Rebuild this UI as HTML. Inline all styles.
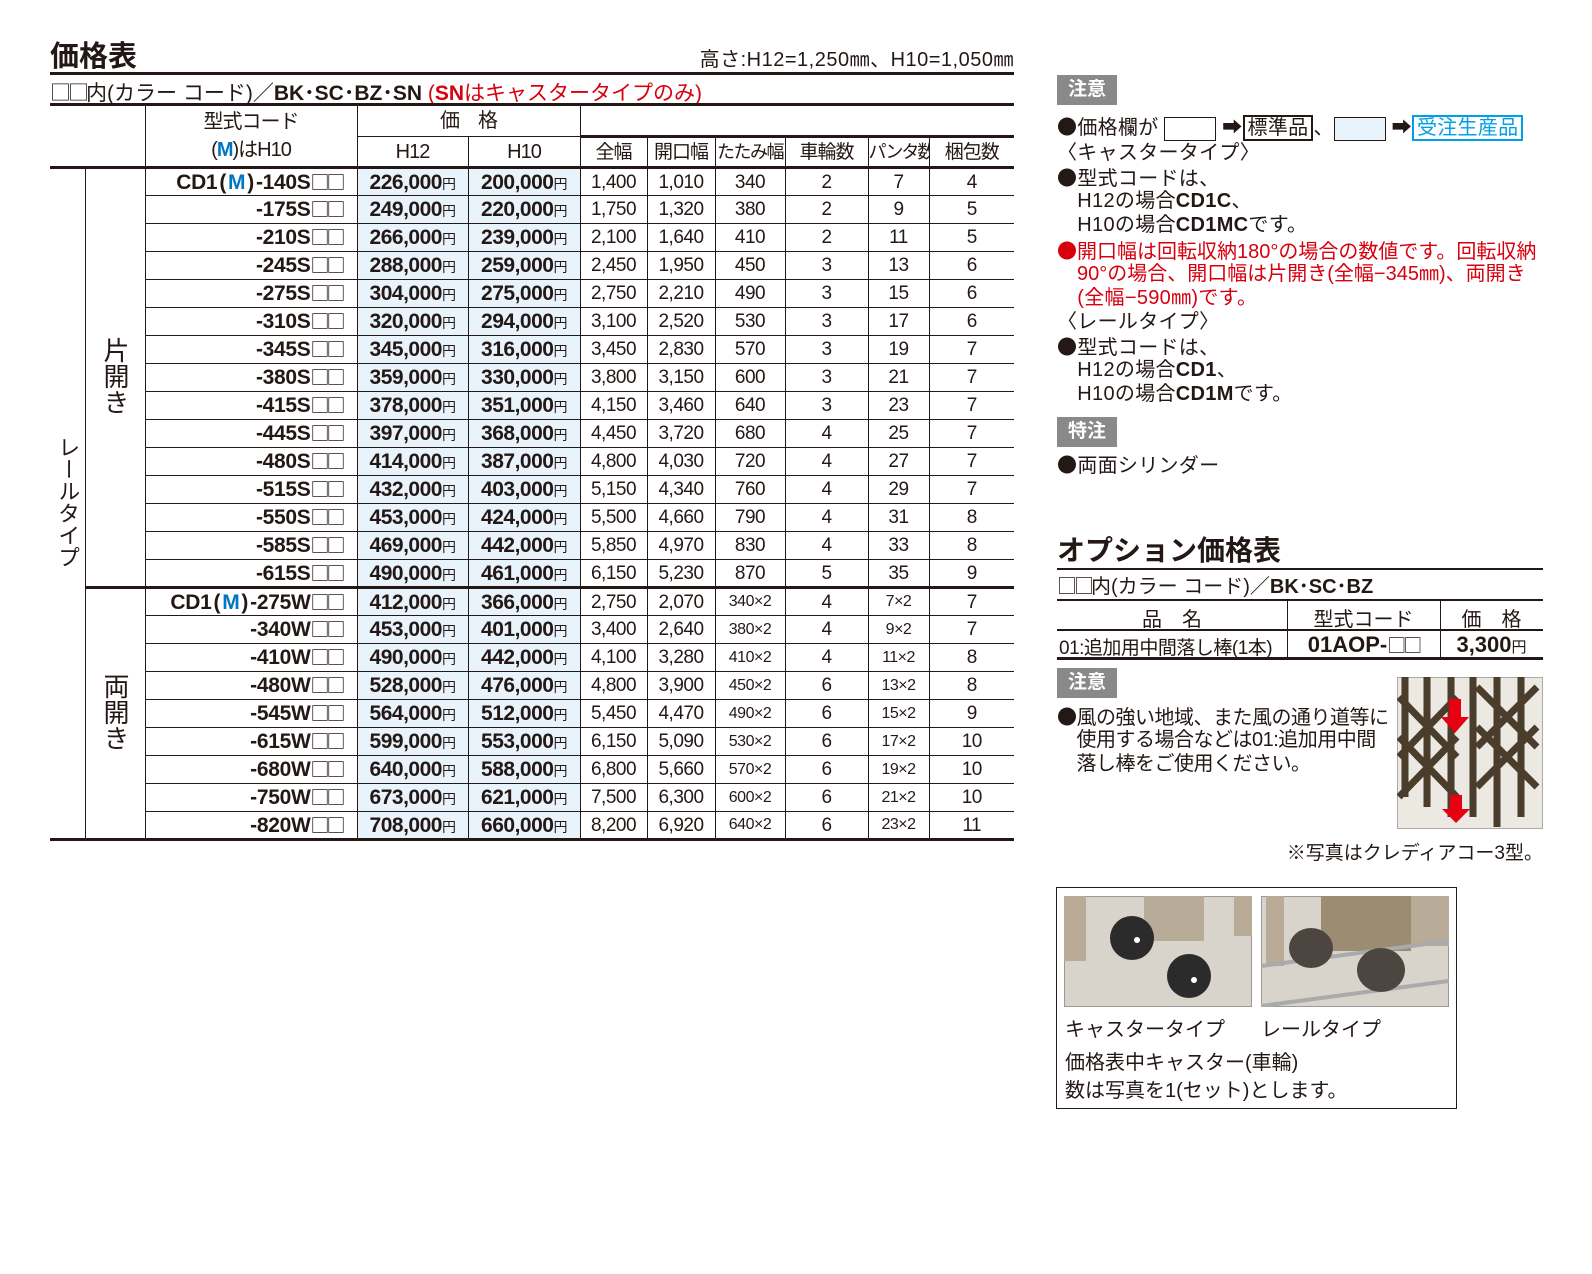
<!DOCTYPE html>
<html><head><meta charset="utf-8">
<style>
*{margin:0;padding:0;box-sizing:border-box}
body{width:1592px;height:1274px;background:#fff;position:relative;font-family:"Liberation Sans","Noto Sans CJK JP",sans-serif;color:#231815;overflow:hidden}
.a{position:absolute;white-space:nowrap}
.k{font-family:"Noto Sans CJK JP",sans-serif;font-weight:normal}
table{position:absolute;left:50px;top:103px;border-collapse:collapse;table-layout:fixed;width:964px;border-top:3px solid #231815;border-bottom:3px solid #231815}
td{border:1px solid #231815;text-align:center;vertical-align:middle;font-size:19px;line-height:1;padding:0;white-space:nowrap;overflow:hidden}
tr.d td{height:28px}
td.c{text-align:right;padding-right:14px;font-weight:bold;font-size:21px;letter-spacing:-0.3px}
td.c .k{font-size:19px;letter-spacing:-3px}
.pr{margin:0 2px}
td.p{background:#e8f3fb;font-weight:bold;font-size:21px;letter-spacing:-0.5px}
td.n{font-size:19px;letter-spacing:-0.5px}
td.s{font-size:16px;letter-spacing:-0.5px}
.y{font-size:14px;font-weight:normal}
.bl{color:#0075c2}
.red{color:#d7000f}
.hd td{font-size:19px;font-weight:normal;letter-spacing:-1px}
.vt{writing-mode:vertical-rl;text-orientation:upright;font-size:26px}
.badge{position:absolute;background:#898989;color:#fff;font-size:19px;font-weight:bold;text-align:center;line-height:30px;width:60px;height:30px}
.t{position:absolute;left:1057px;font-size:20px;white-space:nowrap;line-height:24px;letter-spacing:0.3px}
.tk{border-top:3px solid #231815}
</style></head><body>
<div class="a" style="left:50px;top:33px;font-size:29px;font-weight:bold">価格表</div>
<div class="a" style="right:578px;top:43px;font-size:20px;letter-spacing:0.5px">高さ:H12=1,250㎜、H10=1,050㎜</div>
<div class="a" style="left:50px;top:72px;width:964px;border-top:3px solid #231815"></div>
<div class="a" style="left:50px;top:77px;font-size:21px"><span class="k" style="letter-spacing:-3px">□□</span>内(カラー コード)／<b>BK･SC･BZ･SN</b> <span class="red">(<b>SN</b>はキャスタータイプのみ)</span></div>

<table>
<colgroup><col style="width:35px"><col style="width:60px"><col style="width:212px"><col style="width:111px"><col style="width:112px"><col style="width:67px"><col style="width:68px"><col style="width:70px"><col style="width:83px"><col style="width:61px"><col style="width:85px"></colgroup>
<tr class="hd"><td colspan="2" rowspan="2" style="border-left:none;border-bottom:none"></td><td rowspan="2" style="line-height:28px;font-size:20px">型式コード<br>(<b class="bl">M</b>)はH10</td><td colspan="2" style="height:32px;font-size:20px">価　格</td><td colspan="6" style="border-right:none;border-bottom:3px solid #231815;border-top:none"></td></tr>
<tr class="hd"><td style="height:31px;font-size:20px">H12</td><td style="font-size:20px">H10</td><td>全幅</td><td>開口幅</td><td style="font-size:18px;letter-spacing:-1.5px">たたみ幅</td><td>車輪数</td><td style="font-size:18px;letter-spacing:-2px">パンタ数</td><td style="border-right:none">梱包数</td></tr>
<tr class="d" style="border-top:3px solid #231815"><td rowspan="24" style="border-left:none;border-bottom:none"><span class="vt" style="font-size:22px">レールタイプ</span></td><td rowspan="15"><span class="vt">片開き</span></td><td class="c">CD1<span class="pr">(</span><span class="bl">M</span><span class="pr">)</span>-140S<span class="k">□□</span></td><td class="p">226,000<span class="y">円</span></td><td class="p">200,000<span class="y">円</span></td><td class="n">1,400</td><td class="n">1,010</td><td class="n">340</td><td class="n">2</td><td class="n">7</td><td class="n" style="border-right:none">4</td></tr>
<tr class="d"><td class="c">-175S<span class="k">□□</span></td><td class="p">249,000<span class="y">円</span></td><td class="p">220,000<span class="y">円</span></td><td class="n">1,750</td><td class="n">1,320</td><td class="n">380</td><td class="n">2</td><td class="n">9</td><td class="n" style="border-right:none">5</td></tr>
<tr class="d"><td class="c">-210S<span class="k">□□</span></td><td class="p">266,000<span class="y">円</span></td><td class="p">239,000<span class="y">円</span></td><td class="n">2,100</td><td class="n">1,640</td><td class="n">410</td><td class="n">2</td><td class="n">11</td><td class="n" style="border-right:none">5</td></tr>
<tr class="d"><td class="c">-245S<span class="k">□□</span></td><td class="p">288,000<span class="y">円</span></td><td class="p">259,000<span class="y">円</span></td><td class="n">2,450</td><td class="n">1,950</td><td class="n">450</td><td class="n">3</td><td class="n">13</td><td class="n" style="border-right:none">6</td></tr>
<tr class="d"><td class="c">-275S<span class="k">□□</span></td><td class="p">304,000<span class="y">円</span></td><td class="p">275,000<span class="y">円</span></td><td class="n">2,750</td><td class="n">2,210</td><td class="n">490</td><td class="n">3</td><td class="n">15</td><td class="n" style="border-right:none">6</td></tr>
<tr class="d"><td class="c">-310S<span class="k">□□</span></td><td class="p">320,000<span class="y">円</span></td><td class="p">294,000<span class="y">円</span></td><td class="n">3,100</td><td class="n">2,520</td><td class="n">530</td><td class="n">3</td><td class="n">17</td><td class="n" style="border-right:none">6</td></tr>
<tr class="d"><td class="c">-345S<span class="k">□□</span></td><td class="p">345,000<span class="y">円</span></td><td class="p">316,000<span class="y">円</span></td><td class="n">3,450</td><td class="n">2,830</td><td class="n">570</td><td class="n">3</td><td class="n">19</td><td class="n" style="border-right:none">7</td></tr>
<tr class="d"><td class="c">-380S<span class="k">□□</span></td><td class="p">359,000<span class="y">円</span></td><td class="p">330,000<span class="y">円</span></td><td class="n">3,800</td><td class="n">3,150</td><td class="n">600</td><td class="n">3</td><td class="n">21</td><td class="n" style="border-right:none">7</td></tr>
<tr class="d"><td class="c">-415S<span class="k">□□</span></td><td class="p">378,000<span class="y">円</span></td><td class="p">351,000<span class="y">円</span></td><td class="n">4,150</td><td class="n">3,460</td><td class="n">640</td><td class="n">3</td><td class="n">23</td><td class="n" style="border-right:none">7</td></tr>
<tr class="d"><td class="c">-445S<span class="k">□□</span></td><td class="p">397,000<span class="y">円</span></td><td class="p">368,000<span class="y">円</span></td><td class="n">4,450</td><td class="n">3,720</td><td class="n">680</td><td class="n">4</td><td class="n">25</td><td class="n" style="border-right:none">7</td></tr>
<tr class="d"><td class="c">-480S<span class="k">□□</span></td><td class="p">414,000<span class="y">円</span></td><td class="p">387,000<span class="y">円</span></td><td class="n">4,800</td><td class="n">4,030</td><td class="n">720</td><td class="n">4</td><td class="n">27</td><td class="n" style="border-right:none">7</td></tr>
<tr class="d"><td class="c">-515S<span class="k">□□</span></td><td class="p">432,000<span class="y">円</span></td><td class="p">403,000<span class="y">円</span></td><td class="n">5,150</td><td class="n">4,340</td><td class="n">760</td><td class="n">4</td><td class="n">29</td><td class="n" style="border-right:none">7</td></tr>
<tr class="d"><td class="c">-550S<span class="k">□□</span></td><td class="p">453,000<span class="y">円</span></td><td class="p">424,000<span class="y">円</span></td><td class="n">5,500</td><td class="n">4,660</td><td class="n">790</td><td class="n">4</td><td class="n">31</td><td class="n" style="border-right:none">8</td></tr>
<tr class="d"><td class="c">-585S<span class="k">□□</span></td><td class="p">469,000<span class="y">円</span></td><td class="p">442,000<span class="y">円</span></td><td class="n">5,850</td><td class="n">4,970</td><td class="n">830</td><td class="n">4</td><td class="n">33</td><td class="n" style="border-right:none">8</td></tr>
<tr class="d"><td class="c">-615S<span class="k">□□</span></td><td class="p">490,000<span class="y">円</span></td><td class="p">461,000<span class="y">円</span></td><td class="n">6,150</td><td class="n">5,230</td><td class="n">870</td><td class="n">5</td><td class="n">35</td><td class="n" style="border-right:none">9</td></tr>
<tr class="d"><td rowspan="9" class="tk"><span class="vt">両開き</span></td><td class="c tk">CD1<span class="pr">(</span><span class="bl">M</span><span class="pr">)</span>-275W<span class="k">□□</span></td><td class="p tk">412,000<span class="y">円</span></td><td class="p tk">366,000<span class="y">円</span></td><td class="n tk">2,750</td><td class="n tk">2,070</td><td class="s tk">340×2</td><td class="n tk">4</td><td class="s tk">7×2</td><td class="n tk" style="border-right:none">7</td></tr>
<tr class="d"><td class="c">-340W<span class="k">□□</span></td><td class="p">453,000<span class="y">円</span></td><td class="p">401,000<span class="y">円</span></td><td class="n">3,400</td><td class="n">2,640</td><td class="s">380×2</td><td class="n">4</td><td class="s">9×2</td><td class="n" style="border-right:none">7</td></tr>
<tr class="d"><td class="c">-410W<span class="k">□□</span></td><td class="p">490,000<span class="y">円</span></td><td class="p">442,000<span class="y">円</span></td><td class="n">4,100</td><td class="n">3,280</td><td class="s">410×2</td><td class="n">4</td><td class="s">11×2</td><td class="n" style="border-right:none">8</td></tr>
<tr class="d"><td class="c">-480W<span class="k">□□</span></td><td class="p">528,000<span class="y">円</span></td><td class="p">476,000<span class="y">円</span></td><td class="n">4,800</td><td class="n">3,900</td><td class="s">450×2</td><td class="n">6</td><td class="s">13×2</td><td class="n" style="border-right:none">8</td></tr>
<tr class="d"><td class="c">-545W<span class="k">□□</span></td><td class="p">564,000<span class="y">円</span></td><td class="p">512,000<span class="y">円</span></td><td class="n">5,450</td><td class="n">4,470</td><td class="s">490×2</td><td class="n">6</td><td class="s">15×2</td><td class="n" style="border-right:none">9</td></tr>
<tr class="d"><td class="c">-615W<span class="k">□□</span></td><td class="p">599,000<span class="y">円</span></td><td class="p">553,000<span class="y">円</span></td><td class="n">6,150</td><td class="n">5,090</td><td class="s">530×2</td><td class="n">6</td><td class="s">17×2</td><td class="n" style="border-right:none">10</td></tr>
<tr class="d"><td class="c">-680W<span class="k">□□</span></td><td class="p">640,000<span class="y">円</span></td><td class="p">588,000<span class="y">円</span></td><td class="n">6,800</td><td class="n">5,660</td><td class="s">570×2</td><td class="n">6</td><td class="s">19×2</td><td class="n" style="border-right:none">10</td></tr>
<tr class="d"><td class="c">-750W<span class="k">□□</span></td><td class="p">673,000<span class="y">円</span></td><td class="p">621,000<span class="y">円</span></td><td class="n">7,500</td><td class="n">6,300</td><td class="s">600×2</td><td class="n">6</td><td class="s">21×2</td><td class="n" style="border-right:none">10</td></tr>
<tr class="d"><td class="c">-820W<span class="k">□□</span></td><td class="p">708,000<span class="y">円</span></td><td class="p">660,000<span class="y">円</span></td><td class="n">8,200</td><td class="n">6,920</td><td class="s">640×2</td><td class="n">6</td><td class="s">23×2</td><td class="n" style="border-right:none">11</td></tr>
</table>

<div class="badge" style="left:1057px;top:75px">注意</div>
<div class="t" style="top:114px"><span class="k">●</span>価格欄が <span style="display:inline-block;width:52px;height:24px;border:1px solid #231815;vertical-align:middle"></span> ➡<span style="border:2px solid #231815;padding:0 3px">標準品</span>、<span style="display:inline-block;width:52px;height:24px;border:1px solid #231815;background:#e8f3fb;vertical-align:middle"></span> ➡<span style="border:2px solid #00a0e9;color:#00a0e9;padding:0 3px">受注生産品</span></div>
<div class="t" style="top:141px">〈キャスタータイプ〉</div>
<div class="t" style="top:165px"><span class="k">●</span>型式コードは、</div>
<div class="t" style="top:189px">　H12の場合<b>CD1C</b>、</div>
<div class="t" style="top:213px">　H10の場合<b>CD1MC</b>です。</div>
<div class="t red" style="top:238px;letter-spacing:0"><span class="k">●</span>開口幅は回転収納180°の場合の数値です。回転収納</div>
<div class="t red" style="top:262px;letter-spacing:0">　90°の場合、開口幅は片開き(全幅−345㎜)、両開き</div>
<div class="t red" style="top:286px">　(全幅−590㎜)です。</div>
<div class="t" style="top:310px">〈レールタイプ〉</div>
<div class="t" style="top:334px"><span class="k">●</span>型式コードは、</div>
<div class="t" style="top:358px">　H12の場合<b>CD1</b>、</div>
<div class="t" style="top:382px">　H10の場合<b>CD1M</b>です。</div>
<div class="badge" style="left:1057px;top:417px">特注</div>
<div class="t" style="top:452px"><span class="k">●</span>両面シリンダー</div>

<div class="a" style="left:1057px;top:529px;font-size:28px;font-weight:bold">オプション価格表</div>
<div class="a" style="left:1057px;top:568px;width:486px;border-top:2px solid #231815"></div>
<div class="t" style="top:573px;font-size:20px;letter-spacing:0"><span class="k" style="letter-spacing:-3px">□□</span>内(カラー コード)／<b>BK･SC･BZ</b></div>
<div class="a" style="left:1057px;top:599px;width:486px;height:61px;border-top:2px solid #231815;border-bottom:3px solid #231815"></div>
<div class="a" style="left:1057px;top:629px;width:486px;border-top:2px solid #231815"></div>
<div class="a" style="left:1287px;top:600px;height:58px;border-left:1px solid #231815"></div>
<div class="a" style="left:1440px;top:600px;height:58px;border-left:1px solid #231815"></div>
<div class="a" style="left:1057px;top:603px;width:230px;text-align:center;font-size:20px">品　名</div>
<div class="a" style="left:1287px;top:603px;width:153px;text-align:center;font-size:20px">型式コード</div>
<div class="a" style="left:1440px;top:603px;width:103px;text-align:center;font-size:20px">価　格</div>
<div class="a" style="left:1059px;top:633px;font-size:19px;letter-spacing:-0.5px">01:追加用中間落し棒(1本)</div>
<div class="a" style="left:1287px;top:632px;width:153px;text-align:center;font-size:22px;font-weight:bold;line-height:26px">01AOP-<span class="k" style="font-size:19px;letter-spacing:-3px">□□</span></div>
<div class="a" style="left:1440px;top:632px;width:103px;text-align:center;font-size:22px;font-weight:bold;line-height:26px">3,300<span style="font-size:15px;font-weight:normal">円</span></div>
<div class="badge" style="left:1057px;top:668px">注意</div>
<div class="t" style="top:704px;letter-spacing:-0.5px"><span class="k">●</span>風の強い地域、また風の通り道等に</div>
<div class="t" style="top:728px;letter-spacing:-0.5px">　使用する場合などは01:追加用中間</div>
<div class="t" style="top:752px;letter-spacing:-0.5px">　落し棒をご使用ください。</div>
<svg class="a" style="left:1397px;top:677px" width="146" height="152" viewBox="0 0 146 152">
<rect x="0" y="0" width="146" height="152" fill="#ece8e2" stroke="#aaa" stroke-width="2"/>
<g stroke="#4a3d2c" stroke-width="7" fill="none">
<path d="M8 0V120M30 0V130M54 0V140M76 0V140M100 0V150M124 0V140"/>
<path d="M2 20L60 80M60 20L2 80M2 60L60 120M60 60L2 120M80 10L140 70M140 10L80 70M80 50L140 110M140 50L80 110"/>
</g>
<path d="M52 22h12v18h8l-14 16-14-16h8z" fill="#e60012"/>
<path d="M53 118h12v14h8l-14 14-14-14h8z" fill="#e60012"/>
</svg>
<div class="a" style="right:49px;top:838px;font-size:19px">※写真はクレディアコー3型。</div>

<div class="a" style="left:1056px;top:887px;width:401px;height:222px;border:1px solid #231815"></div>
<svg class="a" style="left:1064px;top:896px" width="188" height="111" viewBox="0 0 188 111">
<rect x="0.5" y="0.5" width="187" height="110" fill="#d8d4cc" stroke="#999"/>
<rect x="0" y="0" width="22" height="65" fill="#b8ab98"/><rect x="80" y="0" width="60" height="45" fill="#b8ab98"/><rect x="170" y="0" width="18" height="40" fill="#b8ab98"/>
<circle cx="68" cy="42" r="22" fill="#2b2b2b"/><circle cx="73" cy="44" r="3" fill="#fff"/>
<circle cx="125" cy="80" r="22" fill="#2b2b2b"/><circle cx="130" cy="84" r="3" fill="#fff"/>
</svg>
<svg class="a" style="left:1261px;top:896px" width="188" height="111" viewBox="0 0 188 111">
<rect x="0.5" y="0.5" width="187" height="110" fill="#d8d4cc" stroke="#999"/>
<rect x="5" y="0" width="18" height="70" fill="#b8ab98"/><rect x="60" y="0" width="90" height="55" fill="#9c8c72"/><rect x="150" y="0" width="38" height="50" fill="#b8ab98"/>
<path d="M0 70L188 45M0 110L188 85" stroke="#aaa" stroke-width="4"/>
<ellipse cx="50" cy="52" rx="22" ry="20" fill="#4d4640"/><ellipse cx="120" cy="74" rx="24" ry="22" fill="#4d4640"/>
</svg>
<div class="a" style="left:1065px;top:1013px;font-size:20px">キャスタータイプ</div>
<div class="a" style="left:1261px;top:1013px;font-size:20px">レールタイプ</div>
<div class="a" style="left:1065px;top:1046px;font-size:20px">価格表中キャスター(車輪)</div>
<div class="a" style="left:1065px;top:1074px;font-size:20px">数は写真を1(セット)とします。</div>
</body></html>
